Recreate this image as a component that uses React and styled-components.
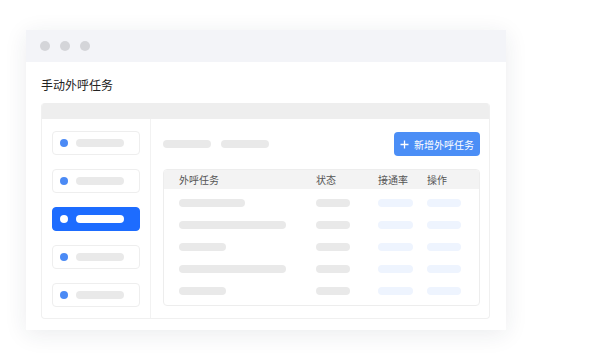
import styled, { createGlobalStyle } from 'styled-components';

const GlobalStyle = createGlobalStyle`
  html, body {
    margin: 0;
    padding: 0;
    background: #ffffff;
    font-family: "Noto Sans CJK SC", "Noto Sans", sans-serif;
  }
`;

const Page = styled.div`
  width: 614px;
  height: 360px;
  padding: 30px 0 0 26px;
  box-sizing: border-box;
`;

const Window = styled.div`
  width: 480px;
  height: 300px;
  background: #ffffff;
  box-shadow: 0 4px 22px rgba(30, 40, 70, 0.09);
  display: flex;
  flex-direction: column;
`;

const TitleBar = styled.div`
  height: 32px;
  background: #f3f4f8;
  display: flex;
  align-items: center;
  gap: 10px;
  padding-left: 14px;
`;

const Dot = styled.span`
  width: 10px;
  height: 10px;
  border-radius: 50%;
  background: #d4d5d9;
`;

const Content = styled.div`
  flex: 1;
  padding: 14px 16px 11px 15px;
  display: flex;
  flex-direction: column;
`;

const Heading = styled.h1`
  margin: 0 0 10px;
  font-size: 12px;
  line-height: 17px;
  font-weight: 400;
  color: #222;
`;

const Panel = styled.div`
  flex: 1;
  border: 1px solid #f0f0f0;
  border-top: none;
  border-radius: 4px;
  display: flex;
  flex-direction: column;
  overflow: hidden;
`;

const PanelHead = styled.div`
  height: 16px;
  background: #eeeeee;
`;

const PanelBody = styled.div`
  flex: 1;
  display: flex;
`;

const Sidebar = styled.div`
  width: 109px;
  border-right: 1px solid #f2f2f2;
  padding: 12px 0 0 10px;
  box-sizing: border-box;
  display: flex;
  flex-direction: column;
  gap: 14px;
`;

const NavItem = styled.div`
  width: 88px;
  height: 24px;
  box-sizing: border-box;
  border-radius: 4px;
  border: 1px solid ${(p) => (p.$active ? '#1d6cff' : '#eeeeee')};
  background: ${(p) => (p.$active ? '#1d6cff' : '#ffffff')};
  display: flex;
  align-items: center;
  padding-left: 7px;
  gap: 8px;
`;

const NavDot = styled.span`
  width: 8px;
  height: 8px;
  border-radius: 50%;
  background: ${(p) => (p.$active ? '#ffffff' : '#4b8af5')};
`;

const Bar = styled.span`
  display: block;
  width: ${(p) => p.$w}px;
  height: 8px;
  border-radius: 4px;
  background: ${(p) => p.$color || '#e9e9e9'};
`;

const Main = styled.div`
  flex: 1;
  padding: 13px 9px 0 12px;
  display: flex;
  flex-direction: column;
`;

const Toolbar = styled.div`
  height: 24px;
  display: flex;
  align-items: center;
  gap: 10px;
  margin-bottom: 13px;
`;

const AddButton = styled.button`
  margin-left: auto;
  width: 86px;
  height: 24px;
  border: none;
  border-radius: 4px;
  background: #4b8ef6;
  color: #ffffff;
  font-family: inherit;
  font-size: 10px;
  display: flex;
  align-items: center;
  justify-content: center;
  gap: 5px;
  padding: 0;
`;

const Table = styled.div`
  border: 1px solid #ededed;
  border-radius: 4px;
  height: 137px;
  box-sizing: border-box;
  overflow: hidden;
`;

const Row = styled.div`
  display: grid;
  grid-template-columns: 137px 62px 49px 1fr;
  align-items: center;
  padding-left: 15px;
  height: ${(p) => (p.$head ? '19px' : '22px')};
  background: ${(p) => (p.$head ? '#f3f3f3' : 'transparent')};
  font-size: 10px;
  color: #555;
`;

const Rows = styled.div`
  padding-top: 3px;
`;

const rows = [66, 107, 47, 107, 47];

const Plus = () => (
  <svg width="9" height="9" viewBox="0 0 9 9">
    <path d="M4.5 0.5v8M0.5 4.5h8" stroke="#fff" strokeWidth="1.3" />
  </svg>
);

export default function App() {
  return (
    <Page>
      <GlobalStyle />
      <Window>
        <TitleBar>
          <Dot />
          <Dot />
          <Dot />
        </TitleBar>
        <Content>
          <Heading>手动外呼任务</Heading>
          <Panel>
            <PanelHead />
            <PanelBody>
              <Sidebar>
                {[0, 1, 2, 3, 4].map((i) => (
                  <NavItem key={i} $active={i === 2}>
                    <NavDot $active={i === 2} />
                    <Bar $w={48} $color={i === 2 ? '#ffffff' : '#e9e9e9'} />
                  </NavItem>
                ))}
              </Sidebar>
              <Main>
                <Toolbar>
                  <Bar $w={48} />
                  <Bar $w={48} />
                  <AddButton>
                    <Plus />
                    新增外呼任务
                  </AddButton>
                </Toolbar>
                <Table>
                  <Row $head>
                    <span>外呼任务</span>
                    <span>状态</span>
                    <span>接通率</span>
                    <span>操作</span>
                  </Row>
                  <Rows>
                    {rows.map((w, i) => (
                      <Row key={i}>
                        <Bar $w={w} />
                        <Bar $w={34} />
                        <Bar $w={35} $color="#eef4fe" />
                        <Bar $w={34} $color="#eef4fe" />
                      </Row>
                    ))}
                  </Rows>
                </Table>
              </Main>
            </PanelBody>
          </Panel>
        </Content>
      </Window>
    </Page>
  );
}
